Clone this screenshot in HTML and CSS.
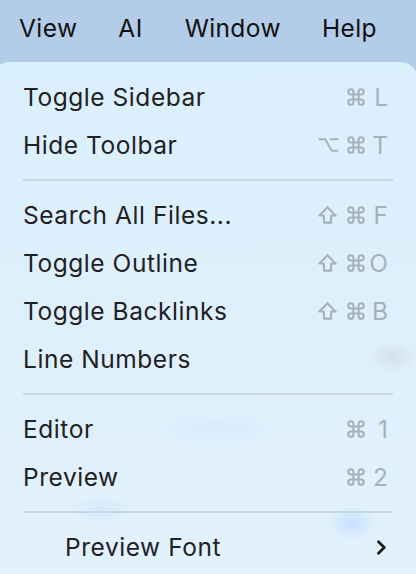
FILE: index.html
```html
<!DOCTYPE html>
<html>
<head>
<meta charset="utf-8">
<link rel="stylesheet" href="styles.css">
</head>
<body>
<div class="menubar">
  <span class="mb-item">View</span>
  <span class="mb-item">AI</span>
  <span class="mb-item mb-window">Window</span>
  <span class="mb-item">Help</span>
</div>
<div class="panel">
  <div class="row"><span class="label">Toggle Sidebar</span>
    <span class="keys"><span class="mod"></span><svg class="cmd" viewBox="1.5 1.5 21 21"><path d="M15 6v12a3 3 0 1 0 3-3H6a3 3 0 1 0 3 3V6a3 3 0 1 0-3 3h12a3 3 0 1 0-3-3"/></svg><span class="letter">L</span></span></div>
  <div class="row"><span class="label">Hide Toolbar</span>
    <span class="keys"><svg class="mod opt" viewBox="0.5 1.5 25 17"><path d="M2 3h7l8 14h7M16 3h8"/></svg><svg class="cmd" viewBox="1.5 1.5 21 21"><path d="M15 6v12a3 3 0 1 0 3-3H6a3 3 0 1 0 3 3V6a3 3 0 1 0-3 3h12a3 3 0 1 0-3-3"/></svg><span class="letter">T</span></span></div>
  <div class="sep"></div>
  <div class="row"><span class="label">Search All Files...</span>
    <span class="keys"><svg class="mod shift" viewBox="1.5 1.5 21 20"><path d="M8 20v-8H3l9-9 9 9h-5v8z"/></svg><svg class="cmd" viewBox="1.5 1.5 21 21"><path d="M15 6v12a3 3 0 1 0 3-3H6a3 3 0 1 0 3 3V6a3 3 0 1 0-3 3h12a3 3 0 1 0-3-3"/></svg><span class="letter">F</span></span></div>
  <div class="row"><span class="label">Toggle Outline</span>
    <span class="keys"><svg class="mod shift" viewBox="1.5 1.5 21 20"><path d="M8 20v-8H3l9-9 9 9h-5v8z"/></svg><svg class="cmd" viewBox="1.5 1.5 21 21"><path d="M15 6v12a3 3 0 1 0 3-3H6a3 3 0 1 0 3 3V6a3 3 0 1 0-3 3h12a3 3 0 1 0-3-3"/></svg><span class="letter">O</span></span></div>
  <div class="row"><span class="label">Toggle Backlinks</span>
    <span class="keys"><svg class="mod shift" viewBox="1.5 1.5 21 20"><path d="M8 20v-8H3l9-9 9 9h-5v8z"/></svg><svg class="cmd" viewBox="1.5 1.5 21 21"><path d="M15 6v12a3 3 0 1 0 3-3H6a3 3 0 1 0 3 3V6a3 3 0 1 0-3 3h12a3 3 0 1 0-3-3"/></svg><span class="letter">B</span></span></div>
  <div class="row"><span class="label">Line Numbers</span></div>
  <div class="sep"></div>
  <div class="row"><span class="label">Editor</span>
    <span class="keys"><span class="mod"></span><svg class="cmd" viewBox="1.5 1.5 21 21"><path d="M15 6v12a3 3 0 1 0 3-3H6a3 3 0 1 0 3 3V6a3 3 0 1 0-3 3h12a3 3 0 1 0-3-3"/></svg><span class="letter">1</span></span></div>
  <div class="row"><span class="label">Preview</span>
    <span class="keys"><span class="mod"></span><svg class="cmd" viewBox="1.5 1.5 21 21"><path d="M15 6v12a3 3 0 1 0 3-3H6a3 3 0 1 0 3 3V6a3 3 0 1 0-3 3h12a3 3 0 1 0-3-3"/></svg><span class="letter">2</span></span></div>
  <div class="sep"></div>
  <div class="row"><span class="label indent">Preview Font</span><svg class="chev" width="11" height="15" viewBox="0 0 11 15"><path d="M2.5 1.8 L8.3 7.5 L2.5 13.2"/></svg></div>
</div>
</body>
</html>
```
FILE: styles.css
```css
html, body {
  margin: 0;
  padding: 0;
}
body {
  width: 416px;
  height: 574px;
  overflow: hidden;
  background: #b3cde9;
  font-family: Inter, "Noto Sans", sans-serif;
  color: #1f2124;
}
.menubar {
  height: 62px;
  display: flex;
  align-items: center;
  gap: 41px;
  padding: 0 0 6px 19px;
  box-sizing: border-box;
  font-size: 24.5px;
  letter-spacing: 0.4px;
  color: #111;
}
.mb-window {
  margin-left: 1px;
}
.panel {
  margin: 0 -2px 0 -8px;
  border-radius: 18px 18px 0 0;
  background:
    radial-gradient(ellipse 24px 16px at 401px 295px, rgba(205, 214, 222, 0.6), rgba(205, 214, 222, 0) 100%),
    radial-gradient(ellipse 24px 18px at 360px 461px, rgba(188, 220, 252, 0.75), rgba(188, 220, 252, 0) 100%),
    radial-gradient(ellipse 30px 14px at 108px 448px, rgba(200, 224, 246, 0.5), rgba(200, 224, 246, 0) 100%),
    radial-gradient(ellipse 60px 16px at 225px 366px, rgba(205, 228, 248, 0.5), rgba(205, 228, 248, 0) 100%),
    linear-gradient(180deg, #dbf0fd 0%, #ddf0fc 40%, #e3f2fd 100%);
  padding: 11px 30px 40px 31px;
  min-height: 520px;
  box-sizing: border-box;
}
.row {
  height: 48px;
  display: flex;
  align-items: center;
  justify-content: space-between;
  font-size: 24.5px;
  letter-spacing: 0.55px;
}
.label.indent {
  padding-left: 42px;
}
.keys {
  display: flex;
  align-items: center;
  color: #a6b1b9;
}
.mod {
  width: 21px;
  margin-right: 8px;
}
.keys svg {
  fill: none;
  stroke: #a6b1b9;
  stroke-linecap: round;
  stroke-linejoin: round;
  display: block;
}
.cmd {
  width: 18px;
  height: 18px;
  stroke-width: 2.4;
}
.shift {
  width: 19px;
  height: 18px;
  margin-right: 10px;
  stroke-width: 2.3;
}
.opt {
  width: 21px;
  height: 14px;
  stroke-width: 2.3;
}
.letter {
  width: 23px;
  text-align: right;
  font-size: 24.5px;
  letter-spacing: 0;
  line-height: 1;
}
.sep {
  height: 2px;
  background: #c8d7e2;
  margin: 10px 0;
  width: 370px;
}
.chev {
  margin-right: 1px;
  fill: none;
  stroke: #1e1e1e;
  stroke-width: 2.8;
  stroke-linecap: round;
  stroke-linejoin: round;
}
```
